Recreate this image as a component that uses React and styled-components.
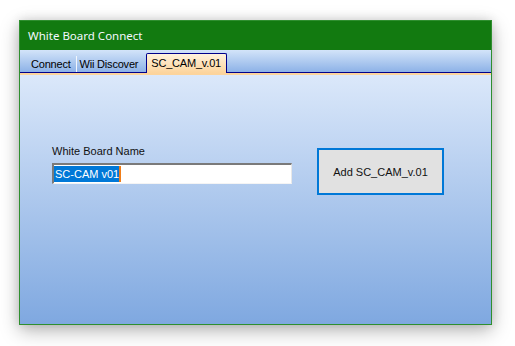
import React from 'react';
import styled, { createGlobalStyle } from 'styled-components';

const GlobalStyle = createGlobalStyle`
  body {
    margin: 0;
    background: #ffffff;
    font-family: "Liberation Sans", Arial, sans-serif;
  }
`;

const Page = styled.div`
  width: 515px;
  height: 346px;
  padding: 20px 0 0 19px;
  box-sizing: border-box;
`;

const Window = styled.div`
  width: 473px;
  height: 305px;
  box-sizing: border-box;
  border: 1px solid #2f8f2f;
  display: flex;
  flex-direction: column;
  box-shadow: 0 6px 18px rgba(0, 0, 0, 0.28), 0 0 10px rgba(0, 0, 0, 0.12);
`;

const TitleBar = styled.div`
  height: 29px;
  background: #127a10;
  color: #f4f8ff;
  font-size: 11.5px;
  display: flex;
  align-items: center;
  padding-left: 8px;
  font-family: "Noto Sans", "Liberation Sans", sans-serif;
`;

const TabStrip = styled.div`
  height: 22px;
  flex-shrink: 0;
  background: linear-gradient(#d3e4f9, #8db2e7);
  border-bottom: 1px solid #00008b;
  display: flex;
  align-items: flex-end;
  padding-left: 8px;
`;

const Tab = styled.div`
  font-size: 11px;
  letter-spacing: -0.2px;
  color: #000;
  white-space: nowrap;
  box-sizing: border-box;
  height: 16px;
  line-height: 16px;
  padding: 0 5px 0 3px;
  border-right: ${({ $sep }) => ($sep ? '1px solid #f2f6fc' : 'none')};
`;

const ActiveTab = styled.div`
  font-size: 11px;
  letter-spacing: -0.2px;
  color: #000;
  white-space: nowrap;
  box-sizing: border-box;
  height: 20px;
  line-height: 19px;
  margin: 0 0 -1px 3px;
  padding: 0 5px 0 4px;
  background: linear-gradient(#fff2dd, #fcd49c);
  border: 1px solid #00008b;
  border-bottom: none;
  border-radius: 2px 2px 0 0;
`;

const AccentLine = styled.div`
  height: 2px;
  background: #fcd49c;
  flex-shrink: 0;
`;

const Content = styled.div`
  flex: 1;
  background: linear-gradient(#dbe8fa, #7fa8e0);
  display: flex;
  align-items: flex-start;
  padding: 69px 0 0 32px;
  gap: 25px;
`;

const Field = styled.div`
  display: flex;
  flex-direction: column;
  gap: 5px;
`;

const Label = styled.div`
  font-size: 11px;
  line-height: 14px;
  color: #111;
`;

const TextBox = styled.div`
  width: 240px;
  height: 21px;
  box-sizing: border-box;
  background: #fff;
  border-top: 2px solid #7a7a7a;
  border-left: 2px solid #7a7a7a;
  border-right: 1px solid #e8e8e8;
  border-bottom: 1px solid #f4f4f4;
  display: flex;
  align-items: center;
`;

const Selected = styled.span`
  background: #0078d7;
  color: #fff;
  font-size: 11px;
  line-height: 16px;
  padding: 0 0 0 1px;
  border-right: 2px solid #f07d18;
`;

const Button = styled.button`
  width: 127px;
  height: 47px;
  margin-top: 4px;
  box-sizing: border-box;
  border: 2px solid #0078d7;
  background: #e1e1e1;
  font-family: "Liberation Sans", Arial, sans-serif;
  font-size: 11px;
  color: #111;
  padding: 0;
`;

export default function App() {
  return (
    <Page>
      <GlobalStyle />
      <Window>
        <TitleBar>White Board Connect</TitleBar>
        <TabStrip>
          <Tab $sep>Connect</Tab>
          <Tab>Wii Discover</Tab>
          <ActiveTab>SC_CAM_v.01</ActiveTab>
        </TabStrip>
        <AccentLine />
        <Content>
          <Field>
            <Label>White Board Name</Label>
            <TextBox>
              <Selected>SC-CAM v01</Selected>
            </TextBox>
          </Field>
          <Button>Add SC_CAM_v.01</Button>
        </Content>
      </Window>
    </Page>
  );
}
